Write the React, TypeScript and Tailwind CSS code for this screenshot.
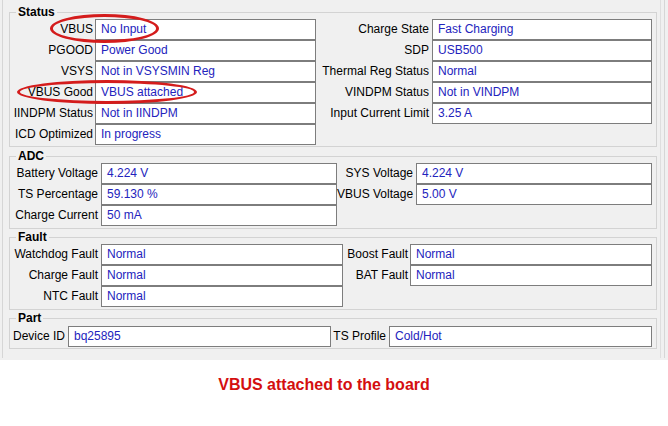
// BQ25895 status panel, VBUS attached capture

type Row = { label: string; value: string };

const Field = ({
  label,
  value,
  labelClass,
  boxClass,
}: Row & { labelClass: string; boxClass: string }) => (
  <div className="flex h-[21px] items-center">
    <span className={`${labelClass} shrink-0 whitespace-nowrap text-right leading-[21px] text-black`}>{label}</span>
    <div className={`${boxClass} h-[21px] shrink-0 border border-[#7d7d7d] bg-white pl-[5px] leading-[19px] text-[#2323bd]`}>
      {value}
    </div>
  </div>
);

const Group = ({ title, className, children }: { title: string; className?: string; children: React.ReactNode }) => (
  <fieldset className={`w-[648px] border border-[#d3d3d3] ${className ?? ""}`}>
    <legend className="ml-[6px] px-[2px] text-[12px] font-bold leading-[14px] text-black">{title}</legend>
    {children}
  </fieldset>
);

export default function App() {
  const statusLeft: Row[] = [
    { label: "VBUS", value: "No Input" },
    { label: "PGOOD", value: "Power Good" },
    { label: "VSYS", value: "Not in VSYSMIN Reg" },
    { label: "VBUS Good", value: "VBUS attached" },
    { label: "IINDPM Status", value: "Not in IINDPM" },
    { label: "ICD Optimized", value: "In progress" },
  ];
  const statusRight: Row[] = [
    { label: "Charge State", value: "Fast Charging" },
    { label: "SDP", value: "USB500" },
    { label: "Thermal Reg Status", value: "Normal" },
    { label: "VINDPM Status", value: "Not in VINDPM" },
    { label: "Input Current Limit", value: "3.25 A" },
  ];
  const adcLeft: Row[] = [
    { label: "Battery Voltage", value: "4.224 V" },
    { label: "TS Percentage", value: "59.130 %" },
    { label: "Charge Current", value: "50 mA" },
  ];
  const adcRight: Row[] = [
    { label: "SYS Voltage", value: "4.224 V" },
    { label: "VBUS Voltage", value: "5.00 V" },
  ];
  const faultLeft: Row[] = [
    { label: "Watchdog Fault", value: "Normal" },
    { label: "Charge Fault", value: "Normal" },
    { label: "NTC Fault", value: "Normal" },
  ];
  const faultRight: Row[] = [
    { label: "Boost Fault", value: "Normal" },
    { label: "BAT Fault", value: "Normal" },
  ];

  return (
    <div
      className="relative h-[426px] w-[668px] overflow-hidden bg-white text-[12px]"
      style={{ fontFamily: '"Liberation Sans", Arial, sans-serif' }}
    >
      <div className="h-[360px] bg-[#f0f0f0]">
        <div className="ml-[2px] h-[358px] w-[663px] border-x border-[#d6d6d6]">
          <div className="h-full w-[658px] border-r border-[#dedede] pl-[6px] pt-[5px]">
            {/* Status */}
            <Group title="Status" className="pb-[1px]">
              <div className="flex">
                <div className="flex flex-col">
                  {statusLeft.map((r) => (
                    <Field key={r.label} {...r} labelClass="w-[85px] pr-[2px]" boxClass="w-[221px]" />
                  ))}
                </div>
                <div className="flex flex-col">
                  {statusRight.map((r) => (
                    <Field key={r.label} {...r} labelClass="w-[116px] pr-[3px]" boxClass="w-[220px]" />
                  ))}
                </div>
              </div>
            </Group>

            {/* ADC */}
            <Group title="ADC" className="mt-[2px] pb-[2px]">
              <div className="flex">
                <div className="flex flex-col">
                  {adcLeft.map((r) => (
                    <Field key={r.label} {...r} labelClass="w-[91px] pr-[3px]" boxClass="w-[236px]" />
                  ))}
                </div>
                <div className="flex flex-col">
                  {adcRight.map((r) => (
                    <Field key={r.label} {...r} labelClass="w-[79px] pr-[3px]" boxClass="w-[236px]" />
                  ))}
                </div>
              </div>
            </Group>

            {/* Fault */}
            <Group title="Fault" className="mt-[1px] pb-[2px]">
              <div className="flex">
                <div className="flex flex-col">
                  {faultLeft.map((r) => (
                    <Field key={r.label} {...r} labelClass="w-[91px] pr-[3px]" boxClass="w-[242px]" />
                  ))}
                </div>
                <div className="flex flex-col">
                  {faultRight.map((r) => (
                    <Field key={r.label} {...r} labelClass="w-[67px] pr-[2px]" boxClass="w-[242px]" />
                  ))}
                </div>
              </div>
            </Group>

            {/* Part */}
            <Group title="Part" className="mt-[1px] pb-[1px] pt-[1px]">
              <div className="flex">
                <Field label="Device ID" value="bq25895" labelClass="w-[58px] pr-[3px]" boxClass="w-[263px]" />
                <Field label="TS Profile" value="Cold/Hot" labelClass="w-[58px] pr-[3px]" boxClass="w-[263px]" />
              </div>
            </Group>
          </div>
        </div>
      </div>

      <div className="w-[648px] pt-[16px] text-center text-[16px] font-bold leading-[18px] text-[#d40f0f]">
        VBUS attached to the board
      </div>

      {/* annotation ellipses */}
      <div className="absolute left-[50px] top-[14px] h-[29px] w-[109px] rounded-[50%] border-[3px] border-[#d41c1c]" />
      <div className="absolute left-[17px] top-[80px] h-[24px] w-[180px] rounded-[50%] border-[3px] border-[#d41c1c]" />
    </div>
  );
}
